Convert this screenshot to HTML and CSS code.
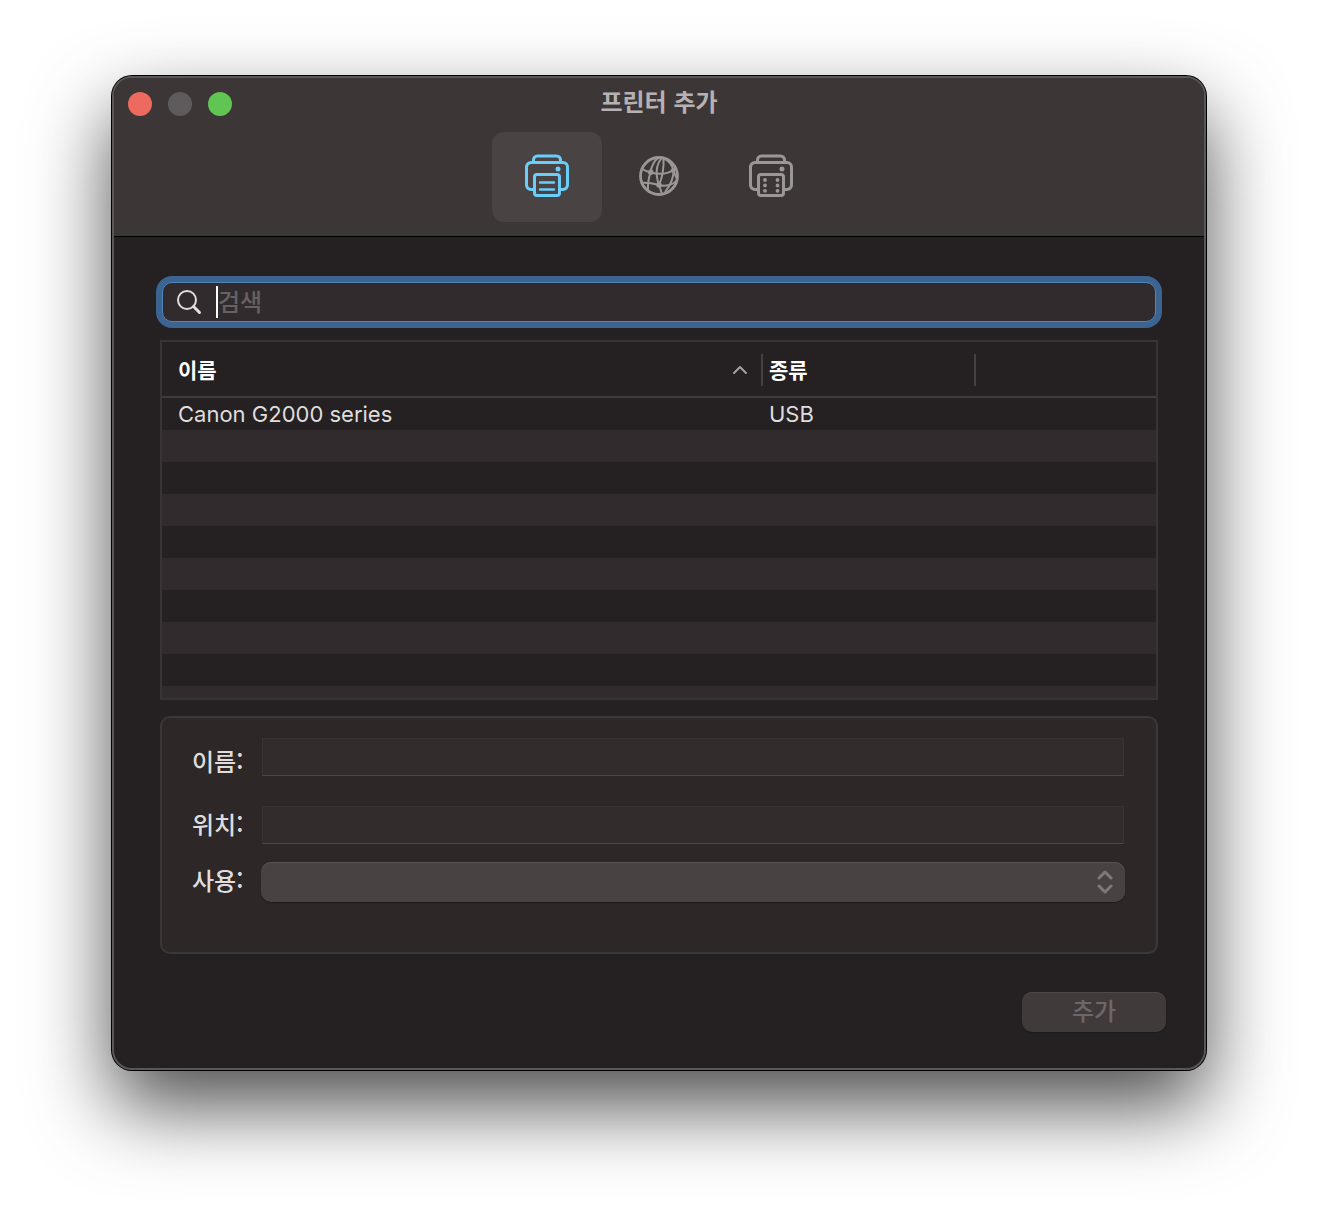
FILE: index.html
```html
<!DOCTYPE html>
<html lang="ko">

<head>
    <meta charset="UTF-8">
    <meta name="viewport" content="width=device-width, initial-scale=1.0">
    <title>프린터 추가</title>
    <link rel="stylesheet" href="styles.css">
</head>

<body>

    <div class="window">
        <header>
            <div class="title-bar">
                <div class="lights">
                    <button type="button" class="light close" aria-label="닫기"></button>
                    <button type="button" class="light minimize" aria-label="최소화" disabled></button>
                    <button type="button" class="light zoom" aria-label="확대"></button>
                </div>
                <h1>프린터 추가</h1>
            </div>
            <nav class="toolbar">
                <button type="button" class="tool active" aria-label="기본">
                    <svg width="46" height="46" viewBox="0 0 46 46" fill="none" stroke="currentColor" stroke-width="3" stroke-linejoin="round" stroke-linecap="round">
                        <path d="M9.500 8.500V7a4 4 0 0 1 4-4h19a4 4 0 0 1 4 4v1.500" />
                        <path d="M9.500 36.500H7a4.500 4.500 0 0 1-4.500-4.500V14A4.500 4.500 0 0 1 7 9.500h32a4.500 4.500 0 0 1 4.500 4.500v18a4.500 4.500 0 0 1-4.500 4.500h-2.500" />
                        <rect x="10.500" y="21.500" width="25" height="21" rx="2.500" />
                        <path d="M16 29.500h14M16 36.500h14" stroke-width="2.400" />
                        <circle cx="34" cy="16" r="2.500" fill="currentColor" stroke="none" />
                    </svg>
                </button>
                <button type="button" class="tool" aria-label="IP">
                    <svg width="46" height="46" viewBox="0 0 46 46" fill="none" stroke="currentColor" stroke-width="2">
                        <circle cx="23" cy="23" r="18.500" stroke-width="2.800" />
                        <path d="M22 5C18 8 15.500 13 14.500 19.500 13 24 11.500 29 12 37" />
                        <path d="M25.500 5C21 11 20 18 21 24c.5 4 1 6 2 8 1 3 2 6 3 9" />
                        <path d="M27.500 5c.5 10-.5 18-4.500 27" />
                        <path d="M29 6c4 2 7 6 8.500 11 .5 8-3 15-8.500 22" />
                        <path d="M5.500 15.500c3 2 6 3.200 9 4 8 2 17 1.500 23-2.500l2-2" />
                        <path d="M5 30c6-1 12 .5 18 2 5 1.500 10 1 15-2l2-2" />
                        <path d="M37 17l4 9" />
                        <g fill="currentColor" stroke="none">
                            <circle cx="14.700" cy="19.300" r="2.700" />
                            <circle cx="37" cy="17.500" r="2.300" />
                            <circle cx="23" cy="32" r="2.800" />
                        </g>
                    </svg>
                </button>
                <button type="button" class="tool" aria-label="Windows">
                    <svg width="46" height="46" viewBox="0 0 46 46" fill="none" stroke="currentColor" stroke-width="3" stroke-linejoin="round" stroke-linecap="round">
                        <path d="M9.500 8.500V7a4 4 0 0 1 4-4h19a4 4 0 0 1 4 4v1.500" />
                        <path d="M9.500 36.500H7a4.500 4.500 0 0 1-4.500-4.500V14A4.500 4.500 0 0 1 7 9.500h32a4.500 4.500 0 0 1 4.500 4.500v18a4.500 4.500 0 0 1-4.500 4.500h-2.500" />
                        <rect x="10.500" y="21.500" width="25" height="21" rx="2.500" />
                        <g fill="currentColor" stroke="none">
                            <circle cx="34" cy="16" r="2.500" />
                            <circle cx="17" cy="27" r="1.900" />
                            <circle cx="17" cy="32.400" r="1.900" />
                            <circle cx="17" cy="37.800" r="1.900" />
                            <circle cx="29.500" cy="27" r="1.900" />
                            <circle cx="29.500" cy="32.400" r="1.900" />
                            <circle cx="29.500" cy="37.800" r="1.900" />
                        </g>
                    </svg>
                </button>
            </nav>
        </header>

        <main>
            <label class="search">
                <svg width="26" height="26" viewBox="0 0 26 26" fill="none" stroke="currentColor" stroke-linecap="round">
                    <circle cx="11" cy="11" r="9" stroke-width="2" />
                    <path d="M17.500 17.500l6 6" stroke-width="3" />
                </svg>
                <span class="caret"></span>
                <input type="search" placeholder="검색" aria-label="검색">
            </label>

            <div class="printers">
                <table>
                    <colgroup>
                        <col>
                        <col class="col-kind">
                        <col class="col-rest">
                    </colgroup>
                    <thead>
                        <tr>
                            <th>
                                <div class="head sorted">이름
                                    <svg width="16" height="10" viewBox="0 0 16 10" fill="none" stroke="currentColor" stroke-width="2" stroke-linecap="round" stroke-linejoin="round">
                                        <path d="M2 8l6-6 6 6" />
                                    </svg>
                                </div>
                            </th>
                            <th>
                                <div class="head">종류</div>
                            </th>
                            <th></th>
                        </tr>
                    </thead>
                    <tbody>
                        <tr>
                            <td>Canon G2000 series</td>
                            <td>USB</td>
                            <td></td>
                        </tr>
                    </tbody>
                </table>
            </div>

            <form class="details">
                <label for="name">이름:</label>
                <input type="text" id="name">
                <label for="location">위치:</label>
                <input type="text" id="location">
                <label for="driver">사용:</label>
                <div class="select">
                    <select id="driver" disabled></select>
                    <svg width="16" height="24" viewBox="0 0 16 24" fill="none" stroke="currentColor" stroke-width="3" stroke-linecap="round" stroke-linejoin="round">
                        <path d="M2 8l6-6 6 6M2 16l6 6 6-6" />
                    </svg>
                </div>
            </form>

            <div class="actions">
                <button type="button" class="add" disabled>추가</button>
            </div>
        </main>
    </div>

</body>

</html>
```

FILE: styles.css
```css
/* General Styles */

* {
    box-sizing: border-box;
}

body {
    margin: 0;
    padding: 76px 112px 148px;
    background-color: #fff;
    color: #dfdddd;
    font-family: "Noto Sans CJK KR", sans-serif;
    font-size: 24px;
    font-weight: 500;
    line-height: 32px;
}

button,
input,
select {
    margin: 0;
    padding: 0;
    border: none;
    font: inherit;
    color: inherit;
}

svg {
    display: block;
    flex: none;
}

.window {
    border: 2px solid #5a5758;
    border-radius: 20px;
    background-color: #252021;
    box-shadow: 0 0 0 1px #000, 0 36px 80px rgba(0, 0, 0, 0.7);
}

/* Title bar and toolbar */

header {
    padding-bottom: 14px;
    border-bottom: 1px solid #000;
    border-radius: 18px 18px 0 0;
    background-color: #3c3637;
}

.title-bar {
    display: grid;
    grid-template-columns: 1fr auto 1fr;
    height: 54px;
    padding: 0 14px;
}

.lights {
    display: flex;
    gap: 16px;
    padding-top: 14px;
}

.light {
    width: 24px;
    height: 24px;
    border-radius: 50%;
}

.close {
    background-color: #ed6a5e;
}

.minimize {
    background-color: #5f5a5b;
}

.zoom {
    background-color: #61c554;
}

h1 {
    margin: 0;
    padding-top: 7px;
    font-size: 24px;
    font-weight: bold;
    color: #b6b1b2;
}

.toolbar {
    display: flex;
    justify-content: center;
    gap: 2px;
}

.tool {
    display: flex;
    align-items: center;
    justify-content: center;
    width: 110px;
    height: 90px;
    padding-bottom: 2px;
    border-radius: 12px;
    background: none;
    color: #9b9798;
}

.tool.active {
    background-color: #494344;
    color: #69cef9;
}

/* Content */

main {
    padding: 45px 46px 36px;
}

.search {
    display: flex;
    align-items: center;
    height: 40px;
    margin: 0 2px 18px;
    padding-left: 13px;
    border: 1px solid #5084b8;
    border-radius: 10px;
    background-color: #322b2d;
    box-shadow: 0 0 0 6px #3b6491;
}

.caret {
    width: 2px;
    height: 32px;
    margin-left: 14px;
    background-color: #fff;
}

.search input {
    flex: 1;
    min-width: 0;
    padding-bottom: 2px;
    background: none;
    outline: none;
}

.search input::placeholder {
    color: #666162;
    opacity: 1;
}

.printers {
    min-height: 360px;
    border: 2px solid #383435;
    background: repeating-linear-gradient(#252021 0 32px, #312b2d 32px 64px) 0 56px no-repeat;
}

table {
    width: 100%;
    table-layout: fixed;
    border-spacing: 0;
    font-size: 22px;
}

.col-kind {
    width: 213px;
}

.col-rest {
    width: 180px;
}

th {
    padding: 12px 0 10px;
    border-bottom: 2px solid #403b3c;
    font-size: 21px;
    line-height: 30px;
    text-align: left;
    color: #fff;
}

.head {
    display: flex;
    align-items: center;
    justify-content: space-between;
    height: 32px;
    padding: 0 0 2px 6px;
    border-right: 2px solid #454041;
}

.sorted {
    padding-right: 13px;
    padding-left: 16px;
}

.sorted svg {
    margin-top: 2px;
    color: #a5a1a2;
}

td {
    height: 32px;
    padding: 0 0 0 6px;
    font-family: Inter, "Noto Sans CJK KR", sans-serif;
    font-weight: 400;
}

td:first-child {
    padding-left: 16px;
}

/* Printer details */

.details {
    display: grid;
    grid-template-columns: auto 1fr;
    align-items: center;
    column-gap: 18px;
    margin-top: 16px;
    padding: 20px 31px 50px 30px;
    border: 2px solid #3c3738;
    border-radius: 10px;
    background-color: #2d2728;
}

.details input {
    height: 38px;
    margin: 0 1px 30px;
    border: 1px solid #383334;
    border-bottom-color: #4b4647;
    background-color: #322c2d;
}

.details #location {
    margin-bottom: 18px;
}

.details label {
    align-self: start;
    padding-top: 2px;
}

.details label:first-of-type {
    padding-top: 7px;
}

.select {
    display: grid;
    align-items: center;
    color: #7d797a;
}

.select select,
.select svg {
    grid-area: 1 / 1;
}

.select svg {
    justify-self: end;
    margin-right: 12px;
    pointer-events: none;
}

.select select {
    appearance: none;
    width: 100%;
    height: 40px;
    border-radius: 10px;
    background-color: #484243;
    box-shadow: inset 0 1px #575253, 0 1px 1px #1f1a1b;
    opacity: 1;
}

.actions {
    display: flex;
    justify-content: flex-end;
    margin: 38px -8px 0 0;
}

.add {
    width: 144px;
    height: 40px;
    padding-bottom: 5px;
    border-radius: 10px;
    background-color: #403a3b;
    box-shadow: inset 0 1px #4d4849, 0 1px 1px #1f1a1b;
    color: #6c6768;
}
```
